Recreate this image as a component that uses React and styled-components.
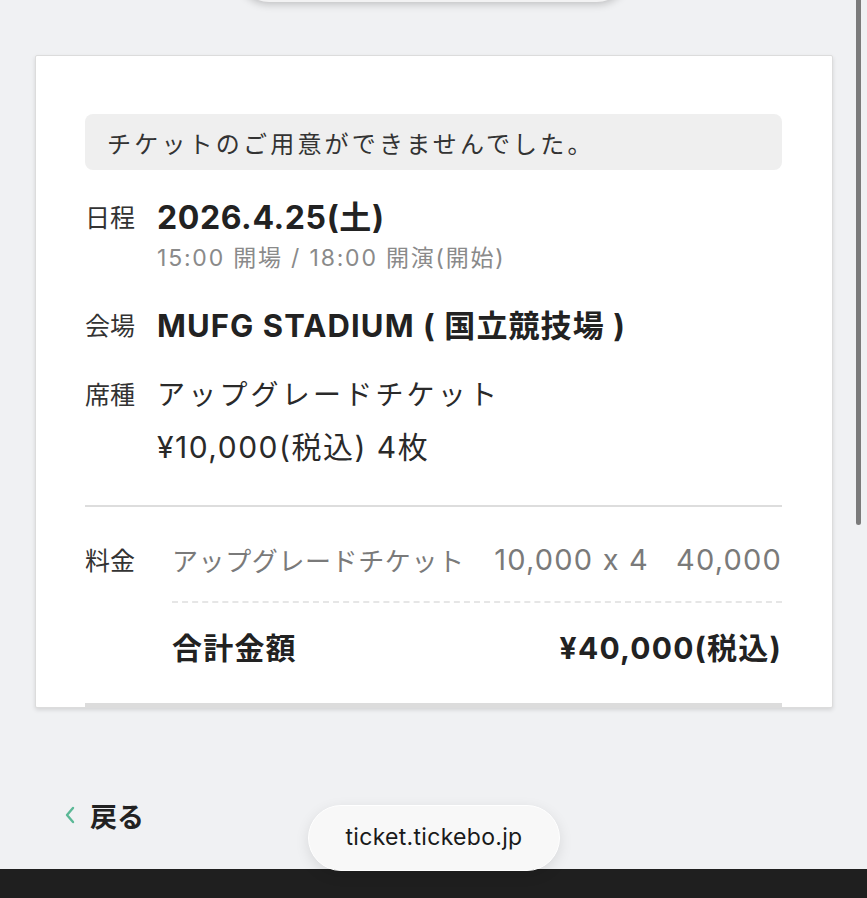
import React from "react";
import styled, { createGlobalStyle } from "styled-components";

const GlobalStyle = createGlobalStyle`
  html, body {
    margin: 0;
    padding: 0;
    background: #f0f1f3;
  }
  body {
    font-family: Inter, "Noto Sans CJK JP", sans-serif;
    font-feature-settings: "calt" 0;
    color: #222;
  }
`;

const Screen = styled.div`
  position: relative;
  height: 898px;
  overflow: hidden;
  display: flex;
  flex-direction: column;
  background: #f0f1f3;
`;

const Main = styled.main`
  flex: 1;
  padding: 55px 34px 0 35px;
`;

const Card = styled.section`
  background: #fff;
  border: 1px solid #dcdcdc;
  border-radius: 2px;
  box-shadow: 0 2px 4px rgba(0, 0, 0, 0.12);
  padding: 58px 50px 0 49px;
`;

const Notice = styled.div`
  height: 56px;
  display: flex;
  align-items: center;
  padding: 0 22px;
  background: #efefef;
  border-radius: 8px;
  font-size: 24px;
  letter-spacing: 3.2px;
  color: #333;
`;

const InfoRow = styled.div`
  display: flex;
  gap: 20px;
  margin-top: ${(p) => p.$gap}px;
`;

const Label = styled.div`
  width: 52px;
  flex-shrink: 0;
  font-size: 25px;
  line-height: ${(p) => p.$lh || 40}px;
  white-space: nowrap;
  color: #333;
`;

const Values = styled.div`
  display: flex;
  flex-direction: column;
`;

const Strong = styled.div`
  font-size: ${(p) => p.$size || 31}px;
  line-height: 40px;
  font-weight: 700;
  letter-spacing: ${(p) => p.$ls || 0.5}px;
  color: #222;
`;

const Sub = styled.div`
  margin-top: 5px;
  font-size: 23px;
  line-height: 30px;
  letter-spacing: 1.8px;
  color: #8a8a8a;
`;

const Plain = styled.div`
  font-size: ${(p) => p.$size || 28}px;
  line-height: 52px;
  letter-spacing: ${(p) => p.$ls || 0}px;
  color: #2a2a2a;
`;

const Rule = styled.hr`
  margin: ${(p) => p.$top}px 0 0;
  border: none;
  border-top: 2px solid #dddddd;
`;

const FeeRow = styled.div`
  display: flex;
  align-items: center;
  margin-top: 32px;
  height: 40px;
`;

const FeeLabel = styled.div`
  width: 87px;
  flex-shrink: 0;
  font-size: 25px;
  color: #333;
`;

const FeeBody = styled.div`
  flex: 1;
  display: flex;
  align-items: center;
  font-size: 29px;
  letter-spacing: 1.2px;
  color: #7a7a7a;
`;

const FeeName = styled.span`
  font-size: 26px;
  letter-spacing: 0.6px;
`;

const FeeQty = styled.span`
  margin-left: auto;
`;

const FeeAmount = styled.span`
  margin-left: 27px;
`;

const Dashed = styled.div`
  margin: 22px 0 0 87px;
  border-top: 2px dashed #e6e6e6;
`;

const TotalRow = styled.div`
  display: flex;
  justify-content: space-between;
  align-items: center;
  margin: 23px 0 0 87px;
  height: 40px;
  font-size: 30px;
  font-weight: 700;
  letter-spacing: 1.2px;
  color: #222;
`;

const CardFoot = styled.div`
  margin-top: 37px;
  height: 4px;
  background: #dcdcdc;
`;

const Back = styled.a`
  display: flex;
  align-items: center;
  gap: 14px;
  margin: 87px 0 0 29px;
  height: 40px;
  font-size: 27px;
  font-weight: 700;
  color: #222;
  text-decoration: none;
`;

const BottomBar = styled.div`
  height: 29px;
  background: #1f1f1f;
`;

const UrlPill = styled.div`
  position: absolute;
  left: 308px;
  top: 805px;
  width: 252px;
  height: 66px;
  border-radius: 33px;
  background: #f8f8f8;
  border: 1px solid #ffffff;
  box-shadow: 0 4px 14px rgba(0, 0, 0, 0.1);
  display: flex;
  align-items: center;
  justify-content: center;
  box-sizing: border-box;
  padding-bottom: 2px;
  font-size: 23px;
  letter-spacing: 0.3px;
  color: #1a1a1a;
`;

const TopPill = styled.div`
  position: absolute;
  left: 238px;
  top: -60px;
  width: 390px;
  height: 62px;
  border-radius: 31px;
  background: #f2f2f3;
  box-shadow: 0 2px 8px rgba(0, 0, 0, 0.22);
`;

const ScrollThumb = styled.div`
  position: absolute;
  right: 6px;
  top: -6px;
  width: 5px;
  height: 531px;
  border-radius: 3px;
  background: #7b7b7b;
`;

function Chevron() {
  return (
    <svg width="12" height="18" viewBox="0 0 12 18">
      <path
        d="M9 2 L3 9 L9 16"
        fill="none"
        stroke="#5bb896"
        strokeWidth="2.4"
        strokeLinecap="round"
        strokeLinejoin="round"
      />
    </svg>
  );
}

function App() {
  return (
    <Screen>
      <GlobalStyle />
      <Main>
        <Card>
          <Notice>チケットのご用意ができませんでした。</Notice>

          <InfoRow $gap={28}>
            <Label>日程</Label>
            <Values>
              <Strong $size={32} $ls={0.6}>
                2026.4.25(土)
              </Strong>
              <Sub>15:00 開場 / 18:00 開演(開始)</Sub>
            </Values>
          </InfoRow>

          <InfoRow $gap={33}>
            <Label>会場</Label>
            <Values>
              <Strong $size={31} $ls={1.1}>
                MUFG STADIUM ( 国立競技場 )
              </Strong>
            </Values>
          </InfoRow>

          <InfoRow $gap={23}>
            <Label $lh={52}>席種</Label>
            <Values>
              <Plain $ls={3.2}>アップグレードチケット</Plain>
              <Plain $size={30} $ls={1.5}>
                ¥10,000(税込) 4枚
              </Plain>
            </Values>
          </InfoRow>

          <Rule $top={32} />

          <FeeRow>
            <FeeLabel>料金</FeeLabel>
            <FeeBody>
              <FeeName>アップグレードチケット</FeeName>
              <FeeQty>10,000 x 4</FeeQty>
              <FeeAmount>40,000</FeeAmount>
            </FeeBody>
          </FeeRow>

          <Dashed />

          <TotalRow>
            <span>合計金額</span>
            <span>¥40,000(税込)</span>
          </TotalRow>

          <CardFoot />
        </Card>

        <Back href="#">
          <Chevron />
          戻る
        </Back>
      </Main>
      <BottomBar />

      <TopPill />
      <ScrollThumb />
      <UrlPill>ticket.tickebo.jp</UrlPill>
    </Screen>
  );
}

export default App;
